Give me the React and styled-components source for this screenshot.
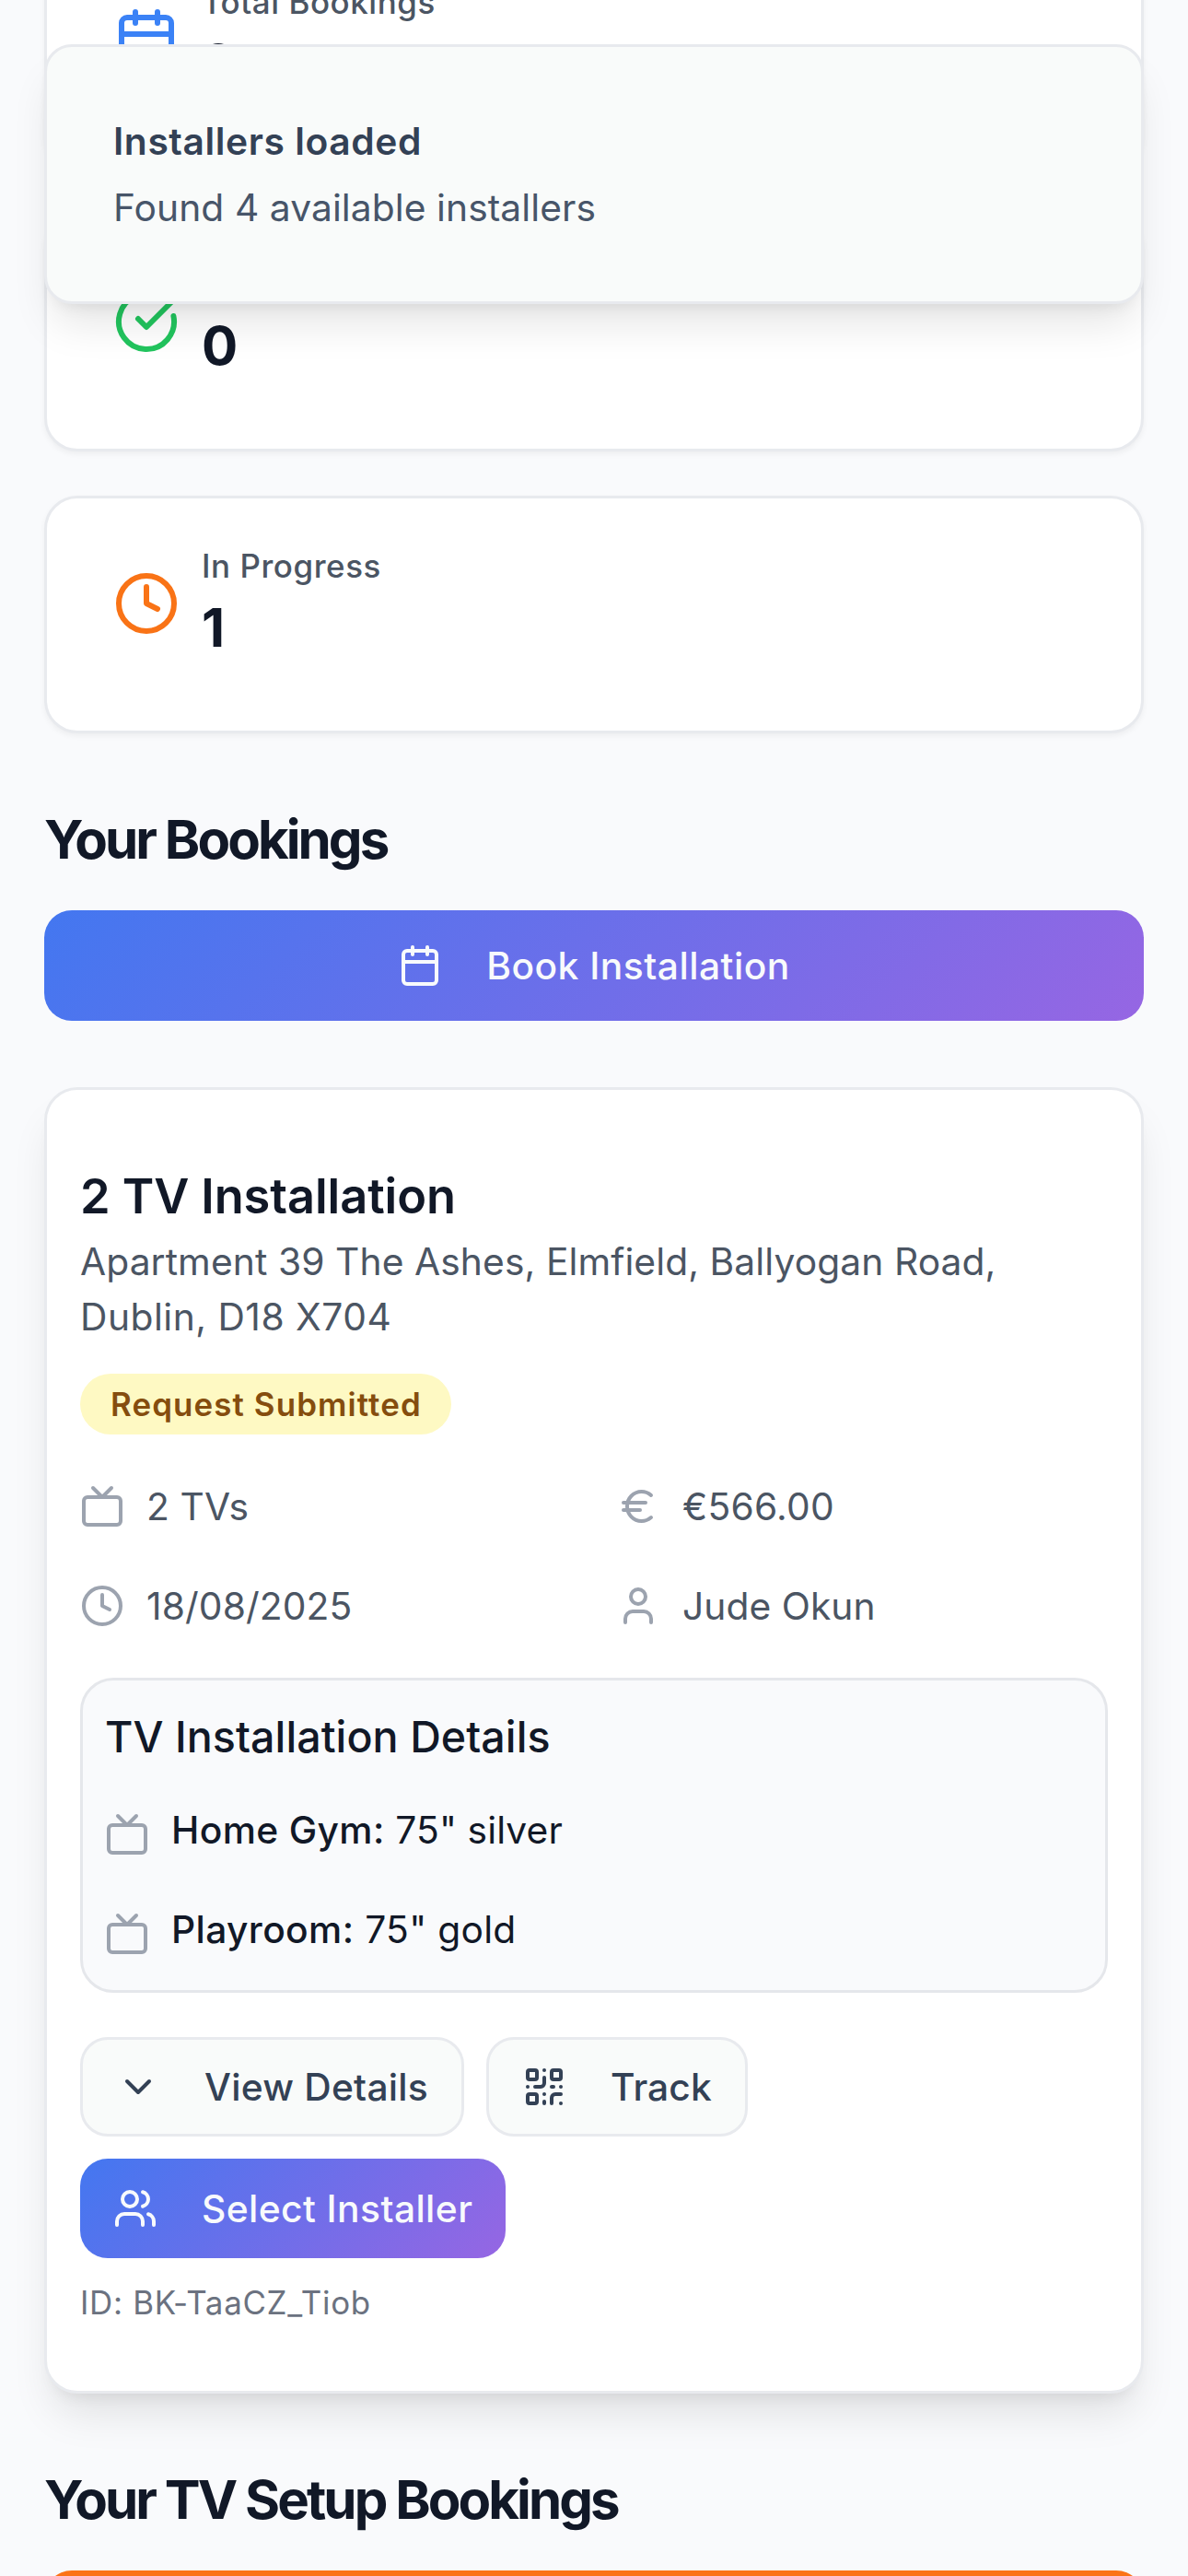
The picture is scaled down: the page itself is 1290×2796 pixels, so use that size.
import React from "react";
import styled, { createGlobalStyle } from "styled-components";
import {
  Calendar,
  ChevronDown,
  CircleCheckBig,
  Clock,
  Euro,
  QrCode,
  Tv,
  User,
  Users,
} from "lucide-react";

const GlobalStyle = createGlobalStyle`
  *, *::before, *::after { box-sizing: border-box; }
  body {
    margin: 0;
    background: #f9fafc;
    color: #111827;
    font-family: Inter, "Open Sans", "Liberation Sans", sans-serif;
    -webkit-font-smoothing: antialiased;
  }
  h2, h3, h4, p { margin: 0; }
  svg { display: block; flex-shrink: 0; }
`;

const Screen = styled.div`
  position: relative;
  width: 1290px;
  height: 2796px;
  overflow: hidden;
  background: #f9fafc;
`;

const Scroller = styled.main`
  display: flex;
  flex-direction: column;
  margin-top: -74px;
  padding: 0 48px;
`;

const Stats = styled.section`
  display: flex;
  flex-direction: column;
  gap: 48px;
`;

const StatCard = styled.article`
  display: flex;
  align-items: center;
  gap: 24px;
  height: 258px;
  padding: 48px 72px 72px;
  background: #fff;
  border: 3px solid #e8eaee;
  border-radius: 36px;
  box-shadow: 0 3px 6px rgba(0, 0, 0, 0.05);
`;

const StatText = styled.div`
  display: flex;
  flex-direction: column;
`;

const StatLabel = styled.span`
  padding-top: 1px;
  color: #4b5563;
  font-size: 34.92px;
  font-weight: 500;
  line-height: 48px;
  letter-spacing: 0.56px;
`;

const StatValue = styled.span`
  padding-top: 3px;
  font-size: 58.2px;
  font-weight: 700;
  line-height: 80px;
`;

const SectionTitle = styled.h2`
  margin-top: 73px;
  margin-bottom: 35px;
  font-size: 58.2px;
  font-weight: 700;
  line-height: 84px;
  letter-spacing: -2.94px;
`;

const Button = styled.button`
  display: inline-flex;
  align-items: center;
  justify-content: center;
  gap: 48px;
  height: ${(p) => (p.$large ? 120 : 108)}px;
  padding: 0 36px;
  border: ${(p) => (p.$variant === "outline" ? "3px solid #e8eaee" : "0")};
  border-radius: 30px;
  background: ${(p) =>
    ({
      outline: "#f9fbfa",
      gradient: "linear-gradient(135deg, #4377f0, #9666e3)",
      orange: "#fb7316",
    })[p.$variant]};
  color: ${(p) => (p.$variant === "outline" ? "#334155" : "#f8fafc")};
  font: 500 40.74px/60px Inter, "Open Sans", "Liberation Sans", sans-serif;
  letter-spacing: ${(p) => p.$tracking || 0}px;
  white-space: nowrap;
`;

const ButtonLabel = styled.span`
  padding-top: 2px;
`;

const BookingCard = styled.article`
  display: flex;
  flex-direction: column;
  margin-top: 72px;
  padding: 72px 36px;
  background: #fff;
  border: 3px solid #e8eaee;
  border-radius: 36px;
  box-shadow: 0 30px 45px -9px rgba(0, 0, 0, 0.1),
    0 12px 18px -12px rgba(0, 0, 0, 0.1);
`;

const BookingTitle = styled.h3`
  padding-top: 2px;
  font-size: 52.38px;
  font-weight: 600;
  line-height: 82px;
  letter-spacing: -0.09px;
`;

const Address = styled.p`
  display: flex;
  flex-direction: column;
  padding-top: 1px;
  color: #4b5563;
  font-size: 40.74px;
  line-height: 60px;
`;

const AddressLine = styled.span`
  letter-spacing: ${(p) => p.$tracking}px;
`;

const Status = styled.span`
  align-self: flex-start;
  margin-top: 31px;
  padding: 9px 32px 9px 33px;
  border-radius: 33px;
  background: #fef9c3;
  color: #854d0e;
  font-size: 34.92px;
  font-weight: 600;
  line-height: 48px;
  letter-spacing: 1.1px;
`;

const Facts = styled.div`
  display: grid;
  grid-template-columns: 1fr 1fr;
  gap: 48px;
  margin: 48px 0;
`;

const Fact = styled.div`
  display: flex;
  align-items: center;
  gap: 24px;
  height: 60px;
  color: #4b5563;
  font-size: 40.74px;
  line-height: 58px;
  letter-spacing: ${(p) => p.$tracking || 0}px;

  svg { color: #9ca3af; }
`;

const FactText = styled.span`
  padding-top: 2px;
`;

const Details = styled.section`
  display: flex;
  flex-direction: column;
  gap: 24px;
  padding: 24px;
  background: #f9fafc;
  border: 3px solid #e5e7eb;
  border-radius: 36px;
`;

const DetailsTitle = styled.h4`
  padding-top: 2px;
  font-size: 46.56px;
  font-weight: 500;
  line-height: 70px;
  letter-spacing: 0.07px;
`;

const DetailRow = styled.div`
  display: flex;
  align-items: flex-start;
  gap: 24px;
  padding: 13px 0 11px;
  font-size: 40.74px;
  line-height: 60px;
  letter-spacing: ${(p) => p.$tracking || 0}px;

  svg {
    margin-top: 10px;
    color: #9ca3af;
  }
`;

const Room = styled.span`
  font-weight: 500;
  letter-spacing: 0.37px;
`;

const Actions = styled.div`
  display: flex;
  flex-wrap: wrap;
  gap: 24px;
  margin-top: 48px;
`;

const BookingId = styled.p`
  margin-top: 24px;
  color: #6b7280;
  font-size: 34.92px;
  line-height: 48px;
  letter-spacing: 0.68px;
`;

const Toast = styled.div`
  position: absolute;
  top: 48px;
  left: 48px;
  right: 48px;
  display: flex;
  flex-direction: column;
  gap: 12px;
  padding: 73px 72px 71px;
  background: #f9fbfa;
  border: 3px solid #e8eaee;
  border-radius: 30px;
  box-shadow: 0 30px 45px -9px rgba(0, 0, 0, 0.1),
    0 12px 18px -12px rgba(0, 0, 0, 0.1);
  font-size: 40.74px;
  line-height: 60px;
`;

const ToastTitle = styled.p`
  color: #334155;
  font-weight: 600;
  letter-spacing: 0.59px;
`;

const ToastText = styled.p`
  color: #475569;
  letter-spacing: 0.08px;
`;

const stats = [
  { label: "Total Bookings", value: "2", Icon: Calendar, color: "#3b82f6" },
  { label: "Completed", value: "0", Icon: CircleCheckBig, color: "#22c55e" },
  { label: "In Progress", value: "1", Icon: Clock, color: "#f97316" },
];

const facts = [
  { text: "2 TVs", Icon: Tv, tracking: 0.14 },
  { text: "€566.00", Icon: Euro, tracking: 0.26 },
  { text: "18/08/2025", Icon: Clock, tracking: 0.12 },
  { text: "Jude Okun", Icon: User, tracking: 0.05 },
];

const rooms = [
  { room: "Home Gym:", setup: '75" silver', tracking: 0.12 },
  { room: "Playroom:", setup: '75" gold', tracking: 0.3 },
];

export default function App() {
  return (
    <>
      <GlobalStyle />
      <Screen>
        <Scroller>
          <Stats>
            {stats.map(({ label, value, Icon, color }) => (
              <StatCard key={label}>
                <Icon size={72} color={color} />
                <StatText>
                  <StatLabel>{label}</StatLabel>
                  <StatValue>{value}</StatValue>
                </StatText>
              </StatCard>
            ))}
          </Stats>

          <SectionTitle>Your Bookings</SectionTitle>
          <Button $variant="gradient" $large $tracking={0.5}>
            <Calendar size={48} />
            <ButtonLabel>Book Installation</ButtonLabel>
          </Button>

          <BookingCard>
            <BookingTitle>2 TV Installation</BookingTitle>
            <Address>
              <AddressLine $tracking={0.1}>
                Apartment 39 The Ashes, Elmfield, Ballyogan Road,
              </AddressLine>
              <AddressLine $tracking={0.5}>Dublin, D18 X704</AddressLine>
            </Address>
            <Status>Request Submitted</Status>
            <Facts>
              {facts.map(({ text, Icon, tracking }) => (
                <Fact key={text} $tracking={tracking}>
                  <Icon size={48} />
                  <FactText>{text}</FactText>
                </Fact>
              ))}
            </Facts>
            <Details>
              <DetailsTitle>TV Installation Details</DetailsTitle>
              {rooms.map(({ room, setup, tracking }) => (
                <DetailRow key={room} $tracking={tracking}>
                  <Tv size={48} />
                  <span>
                    <Room>{room}</Room> {setup}
                  </span>
                </DetailRow>
              ))}
            </Details>
            <Actions>
              <Button $variant="outline" $tracking={0.25}>
                <ChevronDown size={48} />
                <ButtonLabel>View Details</ButtonLabel>
              </Button>
              <Button $variant="outline" $tracking={0.1}>
                <QrCode size={48} />
                <ButtonLabel>Track</ButtonLabel>
              </Button>
              <Button $variant="gradient" $tracking={0.42}>
                <Users size={48} />
                <ButtonLabel>Select Installer</ButtonLabel>
              </Button>
            </Actions>
            <BookingId>ID: BK-TaaCZ_Tiob</BookingId>
          </BookingCard>

          <SectionTitle>Your TV Setup Bookings</SectionTitle>
          <Button $variant="orange" $large />
        </Scroller>

        <Toast>
          <ToastTitle>Installers loaded</ToastTitle>
          <ToastText>Found 4 available installers</ToastText>
        </Toast>
      </Screen>
    </>
  );
}
